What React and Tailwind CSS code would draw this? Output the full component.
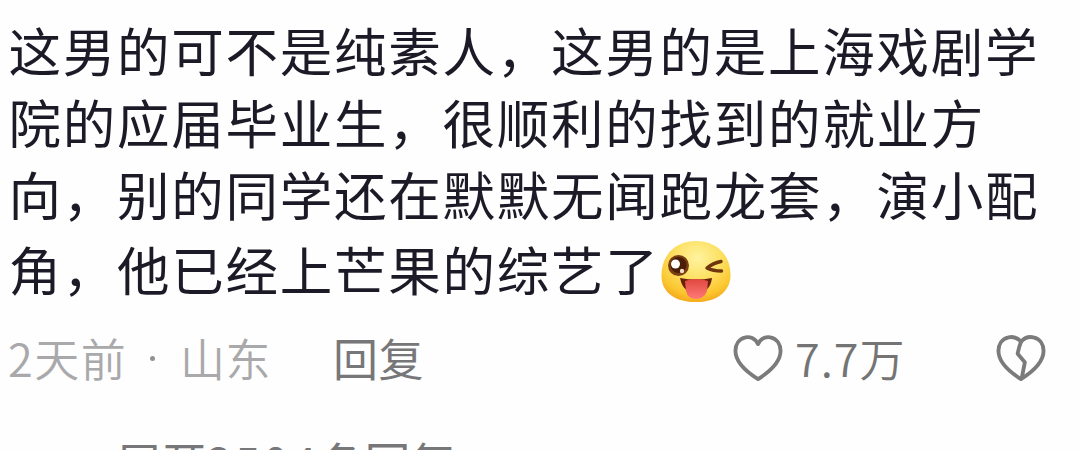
import React from "react";

const commentLines = [
  "这男的可不是纯素人，这男的是上海戏剧学",
  "院的应届毕业生，很顺利的找到的就业方",
  "向，别的同学还在默默无闻跑龙套，演小配",
];

function WinkEmoji() {
  return (
    <svg viewBox="0 0 72 64" className="mt-2 h-16 w-[72px]" aria-hidden="true">
      <defs>
        <radialGradient id="face" cx="0.52" cy="0.28" r="0.75">
          <stop offset="0" stopColor="#fff3a0" />
          <stop offset="0.45" stopColor="#fde164" />
          <stop offset="0.8" stopColor="#fbc62f" />
          <stop offset="1" stopColor="#f4a51c" />
        </radialGradient>
        <linearGradient id="tongue" x1="0" y1="0" x2="0" y2="1">
          <stop offset="0" stopColor="#e0473f" />
          <stop offset="1" stopColor="#ff7a78" />
        </linearGradient>
      </defs>
      <path
        d="M36 1C56 1 70 14 70.500 34C71 51 57 62 36 62C15 62 1 52 1.500 35C2 14 16 1 36 1Z"
        fill="url(#face)"
      />
      <circle cx="18.500" cy="25.500" r="10.500" fill="#7a3f10" />
      <circle cx="18.500" cy="25" r="8" fill="#4a1d08" />
      <circle cx="15.500" cy="24" r="4.500" fill="#fff" />
      <circle cx="22" cy="31" r="2.200" fill="#f3dcc8" />
      <path
        d="M61 21.500Q53 23 47 28Q53 31 61.500 31"
        fill="none"
        stroke="#70350c"
        strokeWidth="3.500"
        strokeLinecap="round"
        strokeLinejoin="round"
      />
      <path d="M20 38Q36 41 52 38Q50 53 36 53Q23 53 20 38Z" fill="#6b200b" />
      <path
        d="M25 41Q36 37 48 41L47 51Q44 59 36 59Q28 59 26 51Z"
        fill="url(#tongue)"
      />
    </svg>
  );
}

function HeartIcon({ broken }) {
  return (
    <svg
      viewBox="0 0 52 50"
      className="h-12 w-[50px]"
      fill="none"
      stroke="#7b7b7b"
      strokeWidth="4"
      strokeLinejoin="round"
      strokeLinecap="round"
    >
      <path
        d={
          broken
            ? "M26 8C22 3.500 17 2.500 13 3.500C6 5 2.500 11 2.500 17.500C2.500 29 14 39.500 26 47C38 39.500 49.500 29 49.500 17.500C49.500 11 46 5 39 3.500C35 2.500 30 3.500 26 8Z"
            : "M26 10.500C23 4 17 2.500 13 3.500C6 5 2.500 11 2.500 17.500C2.500 29 14 39.500 26 47C38 39.500 49.500 29 49.500 17.500C49.500 11 46 5 39 3.500C35 2.500 29 4 26 10.500Z"
        }
      />
      {broken && <path d="M26 8Q24 13 22.500 20.500L30 29.500Q28.500 37 27 45" />}
    </svg>
  );
}

export default function App() {
  return (
    <div className="h-[450px] w-[1080px] overflow-hidden bg-[#fefefe] pt-[13px] font-['Noto_Sans_CJK_SC',sans-serif]">
      <div className="pl-[8.500px] text-[52.500px] leading-[72px] tracking-[1.750px] text-[#1b1a26]">
        {commentLines.map((line) => (
          <div key={line} className="whitespace-nowrap">
            {line}
          </div>
        ))}
        <div className="mt-[2.500px] flex h-[72px] items-center whitespace-nowrap">
          <span>角，他已经上芒果的综艺了</span>
          <WinkEmoji />
        </div>
      </div>

      {/* time, place and actions */}
      <div className="mt-[21.500px] flex h-[66px] items-center pl-2 text-[45px] leading-[66px] whitespace-nowrap">
        <div className="flex w-[172px] items-center tracking-[1.500px] text-[#a9a9ab]">
          <span className="font-[350]">2天前</span>
          <span className="ml-[23px] size-[5px] rounded-full bg-[#929294]" />
        </div>
        <span className="w-[153px] font-[350] tracking-[0.500px] text-[#a9a9ab]">山东</span>
        <button className="w-[400px] text-left tracking-[0.500px] text-[#77777a]">回复</button>
        <HeartIcon />
        <span className="ml-3 w-[201px] font-[350] tracking-[1px] text-[#747474]">7.7万</span>
        <HeartIcon broken />
      </div>

      <button className="mt-[37px] ml-[116px] block text-[45.500px] leading-[66px] whitespace-nowrap text-[#77777a]">
        展开<span className="tracking-[2.800px]">2504</span>条回复
      </button>
    </div>
  );
}
